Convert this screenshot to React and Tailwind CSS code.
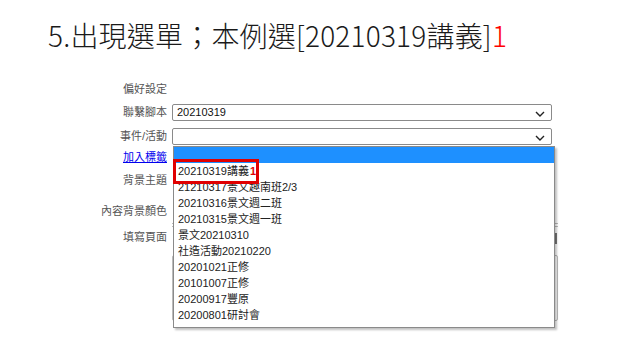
import React from 'react';

const font = { fontFamily: '"Liberation Sans", "Noto Sans CJK TC", sans-serif' };

const items = [
  '21210317景文趣南班2/3',
  '20210316景文週二班',
  '20210315景文週一班',
  '景文20210310',
  '社造活動20210220',
  '20201021正修',
  '20101007正修',
  '20200917豐原',
  '20200801研討會',
];

const Chevron = () => (
  <svg width="10" height="6" viewBox="0 0 10 6" className="absolute right-[6px] top-[6px]">
    <path d="M1 1 L5 5 L9 1" fill="none" stroke="#222" strokeWidth="1.4" />
  </svg>
);

const Label = ({ children, className = '' }) => (
  <div className={`w-[167px] shrink-0 text-right text-[11px] text-[#555] ${className}`}>{children}</div>
);

const App = () => {
  return (
    <div className="w-[640px] h-[360px] bg-white overflow-hidden relative" style={font}>
      {/* Slide title */}
      <div className="pl-[48px] pt-[17px] h-[53px] text-[28px] leading-[36px] tracking-[0.2px] font-light text-[#1a1a1a] font-['Noto_Sans_CJK_TC',sans-serif]">
        5.出現選單；本例選[20210319講義]<span className="text-[#ff0000]">1</span>
      </div>

      {/* Form */}
      <div className="flex flex-col mt-[28px]">
        <div className="flex h-[16px] items-center">
          <Label>偏好設定</Label>
        </div>
        <div className="flex h-[17px] items-center mt-[7px] gap-[5px]">
          <Label>聯繫腳本</Label>
          <div className="relative w-[380px] h-[17px] border border-[#8a8a8a] rounded-[2px] text-[11px] leading-[15px] pl-[4px] text-[#111]">
            20210319
            <Chevron />
          </div>
        </div>
        <div className="flex h-[17px] items-center mt-[7px] gap-[5px]">
          <Label>事件/活動</Label>
          <div className="relative w-[380px] h-[17px] border border-[#8a8a8a] rounded-[2px]">
            <Chevron />
            {/* Open dropdown list */}
            <div className="absolute left-0 top-[17px] w-[382px] h-[182px] bg-white border border-[#8a8a8a] shadow-[2px_2px_2px_rgba(0,0,0,0.25)] z-10 text-[11px] text-[#222]">
              <div className="h-[16px] bg-[#1e90ff]" />
              <div className="relative h-[16px] leading-[16px] pl-[4px]">
                20210319講義<span className="text-[#e00000] font-bold ml-[1px]">1</span>
                <div className="absolute left-[-1px] top-[-4px] w-[86px] h-[25px] border-[3px] border-[#e00000]" />
              </div>
              {items.map((t) => (
                <div key={t} className="h-[16px] leading-[16px] pl-[4px]">{t}</div>
              ))}
            </div>
          </div>
        </div>
        <div className="flex h-[14px] items-center mt-[5px]">
          <Label>
            <span className="text-[#0000ee] underline">加入標籤</span>
          </Label>
        </div>
        <div className="flex h-[16px] items-center mt-[8px]">
          <Label>背景主題</Label>
        </div>
        <div className="flex h-[16px] items-center mt-[15px]">
          <Label>內容背景顏色</Label>
        </div>
        <div className="flex items-start mt-[10px] gap-[5px]">
          <Label className="h-[16px] leading-[16px]">填寫頁面</Label>
          {/* Editor box hidden behind the list */}
          <div className="w-[386px] mt-[-6px] flex flex-col">
            <div className="h-[4px] border-y border-[#bbb]" />
            <div className="h-[12px] flex justify-end pr-[1px] mt-[6px]">
              <div className="w-[2px] h-[11px] bg-[#777]" />
            </div>
            <div className="h-[66px] border border-[#bbb] rounded-[2px] mt-[10px]" />
          </div>
        </div>
      </div>
    </div>
  );
};

export default App;
